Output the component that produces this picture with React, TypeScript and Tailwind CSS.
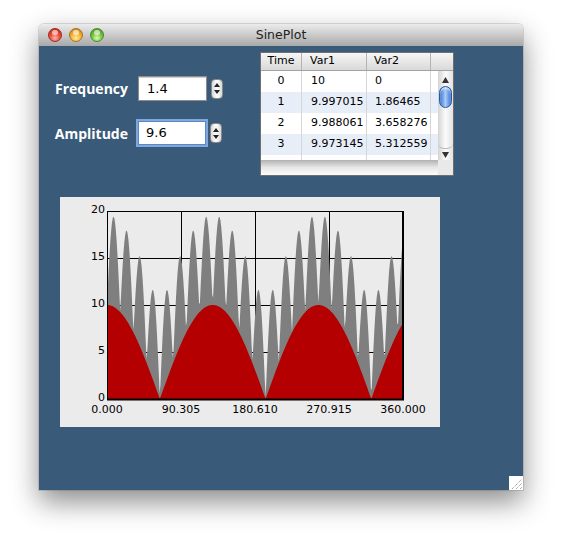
import React from "react";

const rows = [
  ["0", "10", "0"],
  ["1", "9.997015", "1.86465"],
  ["2", "9.988061", "3.658276"],
  ["3", "9.973145", "5.312559"],
];

// plot box inside the chart panel
const X0 = 47;
const X1 = 343;
const Y0 = 14;
const Y1 = 202;

const px = (t: number) => X0 + (t / 360) * (X1 - X0);
const py = (v: number) => Y1 - (Math.min(v, 20) / 20) * (Y1 - Y0);

function areaPoints(fn: (t: number) => number) {
  const pts: string[] = [`${X0},${Y1}`];
  for (let t = 0; t <= 360; t++) {
    pts.push(`${px(t).toFixed(2)},${py(fn(t)).toFixed(2)}`);
  }
  pts.push(`${X1},${Y1}`);
  return pts.join(" ");
}

const rad = Math.PI / 180;
const var1 = (t: number) => Math.abs(10 * Math.cos(1.4 * t * rad));
const var2 = (t: number) => Math.abs(9.6 * Math.sin(11.2 * t * rad));

function Spinner() {
  return (
    <div className="ml-[4px] flex h-[20px] w-[12px] flex-col items-center justify-center gap-[3px] rounded-[4px] border border-[#8b8b8b] bg-gradient-to-r from-[#d9d9d9] via-[#ffffff] to-[#d9d9d9]">
      <svg width="6" height="4" viewBox="0 0 6 4">
        <path d="M3 0 L6 4 L0 4 Z" fill="#222" />
      </svg>
      <svg width="6" height="4" viewBox="0 0 6 4">
        <path d="M0 0 L6 0 L3 4 Z" fill="#222" />
      </svg>
    </div>
  );
}

function TrafficLight({ color }: { color: "red" | "yellow" | "green" }) {
  const bg =
    color === "red"
      ? "bg-[radial-gradient(circle_at_50%_75%,#ffb9a8_0%,#ec4b3f_45%,#b3221a_100%)] border-[#9c2a22]"
      : color === "yellow"
        ? "bg-[radial-gradient(circle_at_50%_75%,#ffe9a0_0%,#f5b335_45%,#b7750d_100%)] border-[#a8731b]"
        : "bg-[radial-gradient(circle_at_50%_75%,#d8ffb0_0%,#79c443_45%,#3e8a1e_100%)] border-[#4c8a2b]";
  return (
    <div className={`relative h-[14px] w-[14px] rounded-full border ${bg}`}>
      <div className="absolute left-[3px] top-[1px] h-[5px] w-[6px] rounded-full bg-white/60" />
    </div>
  );
}

function Chart() {
  const grid = [0, 1, 2, 3, 4];
  const xLabels = ["0.000", "90.305", "180.610", "270.915", "360.000"];
  const yLabels = ["0", "5", "10", "15", "20"];
  return (
    <svg width="380" height="230" viewBox="0 0 380 230" className="block">
      <rect x="0" y="0" width="380" height="230" fill="#ebebeb" />
      {grid.map((i) => (
        <line
          key={"v" + i}
          x1={X0 + i * 74 + 0.5}
          x2={X0 + i * 74 + 0.5}
          y1={Y0}
          y2={Y1}
          stroke="#000"
          strokeWidth="1"
        />
      ))}
      {grid.map((i) => (
        <line
          key={"h" + i}
          x1={X0}
          x2={X1}
          y1={Y1 - i * 47 + 0.5}
          y2={Y1 - i * 47 + 0.5}
          stroke="#000"
          strokeWidth="1"
        />
      ))}
      <polygon points={areaPoints((t) => var1(t) + var2(t))} fill="#7f7f7f" />
      <polygon points={areaPoints(var1)} fill="#b40000" />
      <line x1={X0 + 0.5} x2={X0 + 0.5} y1={Y0} y2={Y1 + 1} stroke="#000" />
      <line x1={X0} x2={X1 + 1} y1={Y1 + 0.5} y2={Y1 + 0.5} stroke="#000" strokeWidth="2" />
      <line x1={X1 - 0.5} x2={X1 - 0.5} y1={Y0} y2={Y1} stroke="#000" />
      <line x1={X0} x2={X1} y1={Y0 - 0.5 + 1} y2={Y0 - 0.5 + 1} stroke="#000" />
      {yLabels.map((l, i) => (
        <text
          key={l}
          x={45}
          y={Y1 - i * 47 + 2}
          textAnchor="end"
          fontFamily="'DejaVu Sans', sans-serif"
          fontSize="11"
          fill="#000"
        >
          {l}
        </text>
      ))}
      {xLabels.map((l, i) => (
        <text
          key={l}
          x={X0 + i * 74}
          y={216}
          textAnchor="middle"
          fontFamily="'DejaVu Sans', sans-serif"
          fontSize="11"
          fill="#000"
        >
          {l}
        </text>
      ))}
    </svg>
  );
}

function DataTable() {
  return (
    <div className="flex h-[124px] w-[194px] flex-col border border-[#6f6f6f] bg-white font-['DejaVu_Sans',sans-serif] text-[11px] text-black">
      <div className="flex h-[18px] border-b border-[#a3a3a3] bg-gradient-to-b from-[#f6f6f6] to-[#d9d9d9]">
        <div className="flex w-[41px] items-center justify-center border-r border-[#b3b3b3]">Time</div>
        <div className="flex w-[65px] items-center border-r border-[#b3b3b3] pl-[8px]">Var1</div>
        <div className="flex w-[64px] items-center border-r border-[#b3b3b3] pl-[7px]">Var2</div>
        <div className="flex-1" />
      </div>
      <div className="flex h-[89px]">
        <div className="flex w-[177px] flex-col">
          {rows.map((r, i) => (
            <div
              key={r[0]}
              className={`flex h-[21px] shrink-0 ${i % 2 === 1 ? "bg-[#e8eef8]" : "bg-white"}`}
            >
              <div className="flex w-[41px] items-center justify-center border-r border-[#d6d6d6]">{r[0]}</div>
              <div className="flex w-[65px] items-center border-r border-[#d6d6d6] pl-[9px]">{r[1]}</div>
              <div className="flex w-[64px] items-center border-r border-[#d6d6d6] pl-[8px]">{r[2]}</div>
            </div>
          ))}
          <div className="flex h-[5px] shrink-0">
            <div className="w-[41px] border-r border-[#d6d6d6]" />
            <div className="w-[65px] border-r border-[#d6d6d6]" />
            <div className="w-[64px] border-r border-[#d6d6d6]" />
          </div>
        </div>
        <div className="relative flex w-[15px] flex-col items-center bg-gradient-to-r from-[#d4d4d4] via-[#fbfbfb] to-[#e2e2e2]">
          <svg width="7" height="6" viewBox="0 0 7 6" className="mt-[6px]">
            <path d="M3.5 0 L7 6 L0 6 Z" fill="#333" />
          </svg>
          <div className="mt-[3px] h-[22px] w-[13px] rounded-full border border-[#2856a8] bg-gradient-to-r from-[#3b73d0] via-[#a9cdf7] to-[#3b73d0] shadow-[inset_0_2px_2px_rgba(255,255,255,0.6)]" />
          <div className="mt-[35px] h-[6px] w-[15px] rounded-b-full border-b border-[#b9b9b9]" />
          <svg width="7" height="6" viewBox="0 0 7 6" className="mt-[3px]">
            <path d="M0 0 L7 0 L3.5 6 Z" fill="#333" />
          </svg>
        </div>
      </div>
      <div className="flex h-[15px]">
        <div className="w-[177px] bg-gradient-to-b from-[#b1b1b1] via-[#e7e7e7] to-[#fcfcfc]" />
        <div className="flex-1 bg-[#e9e9e9]" />
      </div>
    </div>
  );
}

export default function App() {
  return (
    <div className="min-h-[545px] w-[563px] bg-white pl-[39px] pt-[24px]">
      <div className="relative h-[466px] w-[484px] overflow-hidden rounded-t-[5px] shadow-[0_12px_28px_rgba(0,0,0,0.45),0_0_0_1px_rgba(0,0,0,0.12)]">
        {/* title bar */}
        <div className="relative flex h-[22px] items-center bg-gradient-to-b from-[#ececec] to-[#a9a9a9] pl-[9px]">
          <div className="flex gap-[7px]">
            <TrafficLight color="red" />
            <TrafficLight color="yellow" />
            <TrafficLight color="green" />
          </div>
          <div className="absolute inset-0 flex items-center justify-center font-['DejaVu_Sans',sans-serif] text-[12.5px] text-[#222]">
            SinePlot
          </div>
        </div>

        {/* content */}
        <div className="h-[444px] bg-[#395a78] pt-[6px]">
          <div className="flex">
            <div className="flex w-[221px] flex-col gap-[20px] pt-[24px]">
              <div className="flex items-center">
                <div className="w-[89px] text-right font-['Open_Sans',sans-serif] text-[14px] font-bold text-white">
                  Frequency
                </div>
                <div className="ml-[10px] flex h-[25px] w-[69px] items-center border border-[#8e8e8e] bg-white pl-[8px] font-['DejaVu_Sans',sans-serif] text-[13px] text-black shadow-[inset_0_1px_1px_rgba(0,0,0,0.2)]">
                  1.4
                </div>
                <Spinner />
              </div>
              <div className="flex items-center">
                <div className="w-[89px] text-right font-['Open_Sans',sans-serif] text-[14px] font-bold text-white">
                  Amplitude
                </div>
                <div className="ml-[10px] flex h-[24px] w-[68px] items-center border border-[#5b87c4] bg-white pl-[7px] font-['DejaVu_Sans',sans-serif] text-[13px] text-black shadow-[0_0_0_2px_#7fa8dc]">
                  9.6
                </div>
                <Spinner />
              </div>
            </div>
            <DataTable />
          </div>
          <div className="ml-[21px] mt-[21px] w-[380px]">
            <Chart />
          </div>
        </div>

        {/* resize grip */}
        <div className="absolute bottom-0 right-0 h-[14px] w-[14px] bg-white">
          <svg width="14" height="14" viewBox="0 0 14 14">
            <path d="M3 13 L13 3 M7 13 L13 7 M11 13 L13 11" stroke="#8a8a8a" strokeWidth="1" strokeDasharray="1 1" />
          </svg>
        </div>
      </div>
    </div>
  );
}
